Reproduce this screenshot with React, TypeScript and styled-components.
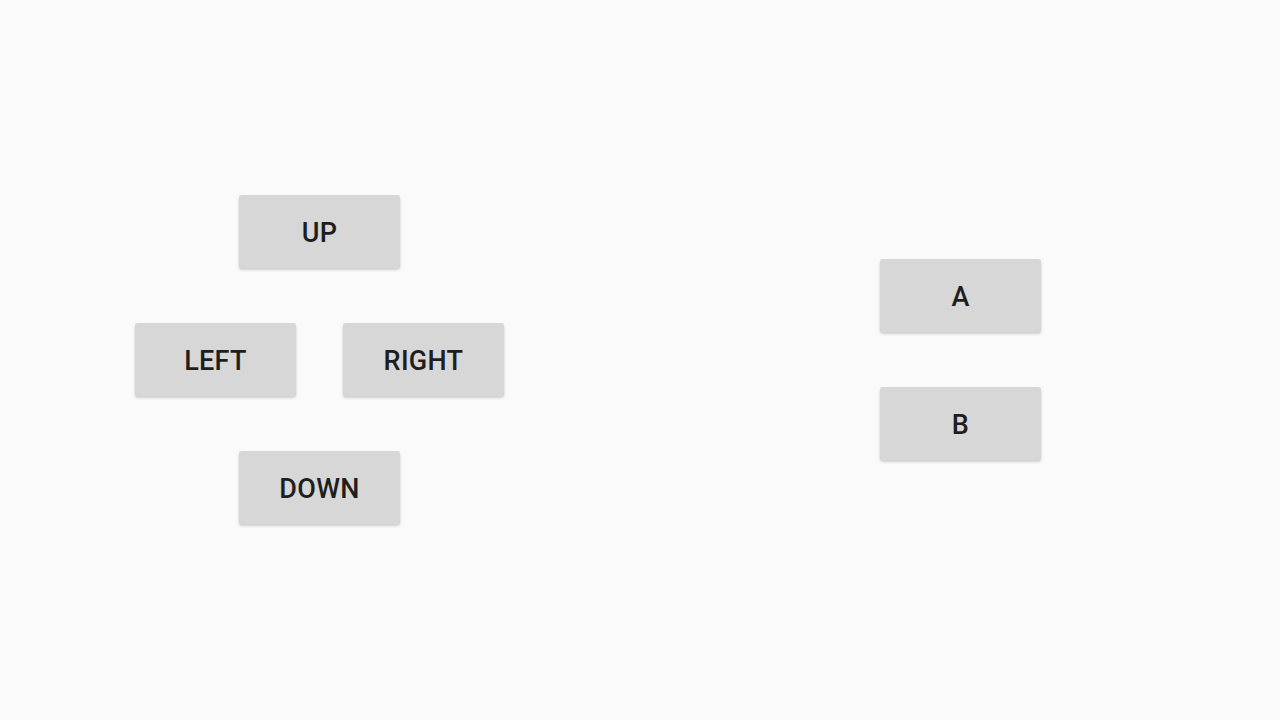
import React from 'react'
import styled, { createGlobalStyle } from 'styled-components'

const GlobalStyle = createGlobalStyle`
  html, body {
    margin: 0;
    padding: 0;
    background: #fafafa;
    font-family: Roboto, "Noto Sans", sans-serif;
  }
`

const Screen = styled.div`
  width: 1280px;
  height: 720px;
  display: flex;
  align-items: center;
  padding-left: 135px;
  padding-bottom: 1px;
  gap: 376px;
  box-sizing: border-box;
`

const Pad = styled.div`
  display: flex;
  flex-direction: column;
  align-items: center;
  gap: 55px;
`

const Row = styled.div`
  display: flex;
  gap: 47px;
`

const Button = styled.button`
  width: 161px;
  height: 73px;
  border: none;
  border-radius: 3px;
  background: #d6d7d6;
  box-shadow: 0 2px 3px rgba(0, 0, 0, 0.18), 0 0 1px rgba(0, 0, 0, 0.08);
  color: #1e1e1e;
  font-family: Roboto, "Noto Sans", sans-serif;
  font-weight: 500;
  font-size: 27px;
  letter-spacing: 0.3px;
  padding: 2px 0 0;
  cursor: pointer;
`

const App = () => {
  return (
    <>
      <GlobalStyle />
      <Screen>
        <Pad>
          <Button>UP</Button>
          <Row>
            <Button>LEFT</Button>
            <Button>RIGHT</Button>
          </Row>
          <Button>DOWN</Button>
        </Pad>
        <Pad>
          <Button>A</Button>
          <Button>B</Button>
        </Pad>
      </Screen>
    </>
  )
}

export default App
